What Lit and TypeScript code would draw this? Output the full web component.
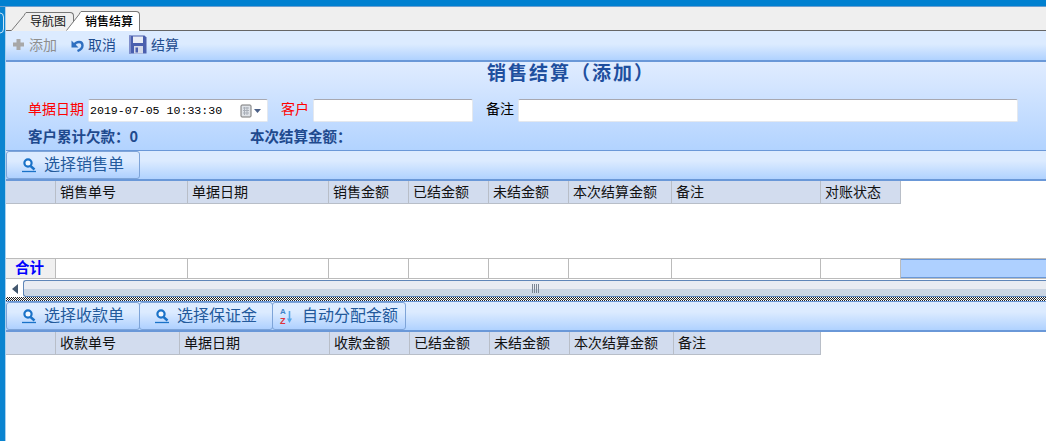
import { LitElement, html, css } from "lit";
import { customElement } from "lit/decorators.js";

const searchIcon = html`<svg class="ico" width="18" height="18" viewBox="0 0 18 18"><circle cx="7" cy="7" r="3.6" fill="#f2f8ff" stroke="#1a72c8" stroke-width="2.2"/><path d="M9.500 10l4 3.500" stroke="#1a72c8" stroke-width="2.400"/><path d="M1 15.500h14" stroke="#1a72c8" stroke-width="1.300"/></svg>`;
const sortIcon = html`<svg class="ico" width="18" height="20" viewBox="0 0 18 20"><text x="1" y="7.500" font-family="Liberation Sans" font-size="8" font-weight="700" fill="#3f83c9">A</text><text x="1" y="17.500" font-family="Liberation Sans" font-size="9" font-weight="700" fill="#e0323c">Z</text><path d="M10.500 5v8" stroke="#58a8e8" stroke-width="1.600"/><path d="M8 12.500h5L10.500 17z" fill="#58a8e8"/></svg>`;

const saleCols = [
  ["", 50], ["销售单号", 132], ["单据日期", 141], ["销售金额", 80], ["已结金额", 80],
  ["未结金额", 80], ["本次结算金额", 103], ["备注", 149], ["对账状态", 80],
] as const;
const recvCols = [
  ["", 50], ["收款单号", 124], ["单据日期", 150], ["收款金额", 80], ["已结金额", 80],
  ["未结金额", 80], ["本次结算金额", 104], ["备注", 147],
] as const;

@customElement("app-root")
export class AppRoot extends LitElement {
  static styles = css`
    :host { display: block; width: 1046px; height: 441px; overflow: hidden; background: #fff;
      font-family: "Noto Sans CJK SC", "Liberation Sans", sans-serif; font-size: 14px; color: #000; }
    .topbar { height: 6px; background: #0080d0; border-bottom: 1px solid #6a9ed0; }
    .shell { display: flex; height: 434px; }
    .strip { width: 5px; flex: none; background: #0a84d0; border-right: 1px solid #a8d0ee; }
    .strip svg { display: block; margin-top: 4px; }
    .main { flex: 1; min-width: 0; display: flex; flex-direction: column; }
    .tabs { height: 23px; flex: none; box-sizing: content-box; background: #efefef; border-bottom: 1px solid #666; display: flex; align-items: flex-end; padding-left: 5px; }
    .tab { display: flex; height: 19px; margin-bottom: -1px; font-size: 12px; }
    .tab svg { flex: none; display: block; }
    .tab .lab { box-sizing: border-box; border-top: 1px solid #777; border-right: 1px solid #777; border-top-right-radius: 4px; line-height: 16px; background: #efefef; color: #111; padding-left: 4px; }
    .tab.first .lab { width: 48px; }
    .tab.active { margin-left: -8px; height: 20px; }
    .tab.active .lab { width: 59px; background: #fff; font-weight: 500; color: #000; line-height: 17px; }
    .bar { flex: none; background: linear-gradient(#dcebff 0%, #dcebff 45%, #b0d2ff 100%); border-bottom: 2px solid #6a98d8; }
    .top-tools { height: 29px; box-sizing: content-box; display: flex; align-items: center; gap: 14px; padding-left: 6px; }
    .tool { display: flex; align-items: center; gap: 4px; color: #1f4d8f; font-size: 14px; padding-bottom: 2px; }
    .tool.off { color: #8e8e8e; }
    .tool .t { margin-bottom: 2px; }
    .tool.save { margin-left: -2px; }
    .form { height: 88px; flex: none; background: linear-gradient(#e0ecff, #b2d3ff); display: flex; flex-direction: column; }
    .title { height: 24px; margin-top: -2px; text-align: center; font-size: 19px; line-height: 24px; font-weight: 700; color: #1f4f9e; letter-spacing: 2px; padding-left: 90px; }
    .fields { display: flex; align-items: center; height: 23px; margin-top: 15px; padding-left: 22px; }
    .fields label { flex: none; padding-bottom: 5px; }
    .req { color: #f00; }
    .input { height: 23px; box-sizing: border-box; background: #fff; border: 1px solid #e4e8ee; border-top-color: #a8a8b0; border-radius: 2px; flex: none; }
    .date { width: 180px; margin-left: 4px; display: flex; align-items: center; font-family: "Liberation Mono", monospace; font-size: 11.6px; }
    .date span { flex: 1; padding-left: 1px; }
    .date svg { margin-right: 5px; }
    .cust { width: 160px; margin-left: 4px; }
    .note { width: 500px; margin-left: 4px; }
    .lm { margin-left: 13px; }
    .sum { display: flex; height: 23px; margin-top: 2px; padding-left: 22px; font-weight: 700; color: #1f4a8e; font-size: 14.5px; align-items: center; }
    .sum span:first-child { width: 222px; }
    .btnbar { height: 28px; box-sizing: content-box; display: flex; align-items: stretch; background: linear-gradient(#dcebff 0%, #dcebff 35%, #b0d2ff 100%); border-top: 1px solid #6a98d8; border-bottom: 2px solid #6a98d8; flex: none; }
    .btn { display: flex; align-items: center; box-sizing: border-box; border: 1px solid #7ea4d8; margin-left: -1px; font-size: 16px; color: #235a9c; padding-left: 14px; border-radius: 3px; background: linear-gradient(#dcebff 35%, #aed0ff); }
    .btn:first-child { margin-left: 0; }
    .btn .ico { flex: none; margin-right: 5px; }
    .btn .t { margin-bottom: 5px; }
    .w134 { width: 134px; }
    .auto { width: 134px; padding-left: 6px; }
    .grid { display: flex; height: 23px; flex: none; }
    .hd { box-sizing: border-box; height: 23px; background: #d2dcee; border-right: 1px solid #b8bec8; border-bottom: 1px solid #b8bec8; padding-left: 4px; line-height: 21px; font-size: 14px; color: #111; flex: none; }
    .white { height: 54px; flex: none; background: #fff; }
    .total { display: flex; height: 21px; flex: none; border-top: 1px solid #bbb; border-bottom: 1px solid #bbb; box-sizing: border-box; }
    .total .c { box-sizing: border-box; border-right: 1px solid #bbb; flex: none; }
    .total .c.first { background: #f0f0f0; color: #00f; font-weight: 700; padding-left: 9px; line-height: 16px; font-size: 14.5px; }
    .total .fill { flex: 1; background: #aed0ff; border-top: 1px solid #6a98d8; border-bottom: 1px solid #6a98d8; }
    .scroll { height: 18px; flex: none; display: flex; align-items: stretch; background: #fff; padding-top: 1px; box-sizing: border-box; }
    .scroll .arrow { width: 17px; display: flex; align-items: center; justify-content: center; flex: none; }
    .thumb { flex: 1; border: 1px solid #5f86b8; border-right: none; border-radius: 3px 0 0 3px; background: linear-gradient(#e9ecf2 55%, #c9d4e2 55%); display: flex; align-items: center; justify-content: center; padding-left: 2px; }
    .split { height: 4px; flex: none; background-color: #fff; background-image: repeating-conic-gradient(#222 0 25%, #fff 0 50%); background-size: 2px 2px; box-sizing: border-box; }
    .body { flex: 1; background: #fff; }
  `;

  renderHeader(cols: readonly (readonly [string, number])[]) {
    return html`<div class="grid">${cols.map(([t, w]) => html`<div class="hd" style="width:${w}px">${t}</div>`)}</div>`;
  }

  render() {
    return html`
      <div class="topbar"></div>
      <div class="shell">
        <div class="strip"><svg width="5" height="24" viewBox="0 0 5 24"><path d="M0 2Q3.500 2 3.500 6V18Q3.500 22 0 22" fill="none" stroke="#cfe6f6"/></svg></div>
        <div class="main">
          <div class="tabs">
            <div class="tab first">
              <svg width="15" height="19" viewBox="0 0 15 19"><path d="M0 19L14 3Q15 1 15 .5V19z" fill="#efefef"/><path d="M.5 18.500L13 3.500Q14 1.500 15 .5" fill="none" stroke="#777"/></svg>
              <span class="lab">导航图</span>
            </div>
            <div class="tab active">
              <svg width="15" height="20" viewBox="0 0 15 20"><path d="M0 20L14 3Q15 1 15 .5V20z" fill="#fff"/><path d="M.5 19.500L13 3.500Q14 1.500 15 .5" fill="none" stroke="#777"/></svg>
              <span class="lab">销售结算</span>
            </div>
          </div>
          <div class="bar top-tools">
            <span class="tool off">
              <svg width="13" height="13" viewBox="0 0 13 13"><path d="M4.500 1h4v3.500H12v4H8.500V12h-4V8.500H1v-4h3.500z" fill="#a8a8a8"/></svg><span class="t">添加</span>
            </span>
            <span class="tool">
              <svg width="13" height="14" viewBox="0 0 13 14"><path d="M3 7C5.500 3 11.500 3 11.500 7.500 11.500 10.500 9 12 6.500 13" fill="none" stroke="#2f6fc0" stroke-width="2.400"/><path d="M.5 2.500V9.500H7.500z" fill="#2f6fc0"/></svg><span class="t">取消</span>
            </span>
            <span class="tool save">
              <svg width="19" height="19" viewBox="0 0 19 19"><path d="M1 .5h15.500L18.500 2.500V18.500H1z" fill="#4a5fae"/><path d="M1 .5h2V18.500H1z" fill="#7f8ecb"/><rect x="5" y="1.500" width="10" height="6.500" fill="#e9edf6"/><rect x="6" y="11" width="9" height="7.500" fill="#d4daea"/><rect x="7.500" y="12.500" width="2.500" height="5" fill="#4a5fae"/></svg><span class="t">结算</span>
            </span>
          </div>
          <div class="form">
            <div class="title">销售结算（添加）</div>
            <div class="fields">
              <label class="req">单据日期</label>
              <div class="input date"><span>2019-07-05 10:33:30</span>
                <svg width="22" height="14" viewBox="0 0 22 14"><rect x="1" y="1" width="10" height="12" rx="1" fill="#dfe3e8" stroke="#777"/><path d="M3 4h6M3 6.500h6M3 9h6M4.500 3v8M7 3v8" stroke="#a9afb8"/><path d="M14 5h7l-3.500 4z" fill="#4a5f86"/></svg>
              </div>
              <label class="req lm">客户</label>
              <div class="input cust"></div>
              <label class="lm">备注</label>
              <div class="input note"></div>
            </div>
            <div class="sum"><span>客户累计欠款：0</span><span>本次结算金额：</span></div>
          </div>
          <div class="btnbar">
            <div class="btn w134">${searchIcon}<span class="t">选择销售单</span></div>
          </div>
          ${this.renderHeader(saleCols)}
          <div class="white"></div>
          <div class="total">
            ${saleCols.map(([, w], i) => html`<div class="c ${i === 0 ? "first" : ""}" style="width:${w}px">${i === 0 ? "合计" : ""}</div>`)}
            <div class="fill"></div>
          </div>
          <div class="scroll">
            <div class="arrow"><svg width="6" height="10" viewBox="0 0 6 10"><path d="M6 0v10L0 5z" fill="#44586f"/></svg></div>
            <div class="thumb"><svg width="9" height="9" viewBox="0 0 9 9"><path d="M.5 0v9M2.500 0v9M4.500 0v9M6.500 0v9" stroke="#7c8794"/></svg></div>
          </div>
          <div class="split"></div>
          <div class="btnbar">
            <div class="btn w134">${searchIcon}<span class="t">选择收款单</span></div>
            <div class="btn w134">${searchIcon}<span class="t">选择保证金</span></div>
            <div class="btn auto">${sortIcon}<span class="t">自动分配金额</span></div>
          </div>
          ${this.renderHeader(recvCols)}
          <div class="body"></div>
        </div>
      </div>
    `;
  }
}
